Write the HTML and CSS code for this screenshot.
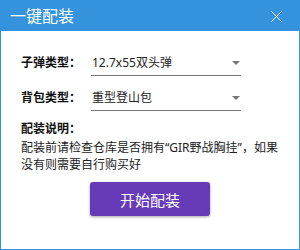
FILE: index.html
```html
<!DOCTYPE html>
<html lang="zh-CN">
  <head>
    <meta charset="UTF-8" />
    <meta name="viewport" content="width=device-width, initial-scale=1.0" />
    <title>一键配装</title>
    <link rel="stylesheet" href="styles.css">
  </head>
  <body>
    <div class="window">
      <div class="titlebar">
        <span class="title">一键配装</span>
        <svg class="close" width="11" height="11" viewBox="0 0 11 11">
          <path d="M0.5 0.5 L10.5 10.5 M10.5 0.5 L0.5 10.5" stroke="#fff" stroke-width="1" fill="none" />
        </svg>
      </div>
      <div class="content">
        <div class="row">
          <span class="label">子弹类型：</span>
          <div class="select">
            <span class="value">12.7x55双头弹</span>
            <span class="arrow"></span>
          </div>
        </div>
        <div class="row">
          <span class="label">背包类型：</span>
          <div class="select">
            <span class="value">重型登山包</span>
            <span class="arrow"></span>
          </div>
        </div>
        <div class="note-title">配装说明：</div>
        <p class="note">配装前请检查仓库是否拥有“GIR野战胸挂”，如果没有则需要自行购买好</p>
        <div class="actions">
          <button class="btn-start">开始配装</button>
        </div>
      </div>
    </div>
  </body>
</html>
```

FILE: styles.css
```css
* {
  margin: 0;
  padding: 0;
  box-sizing: border-box;
}

body {
  background-color: #fff;
  font-family: "Noto Sans", "Noto Sans CJK SC", sans-serif;
}

.window {
  width: 300px;
  height: 250px;
  border: 1px solid #3592dc;
  background-color: #fff;
}

.titlebar {
  height: 30px;
  background-color: #3592dc;
  display: flex;
  align-items: center;
  justify-content: space-between;
  padding: 0 17px 0 9px;
  color: #fff;
}

.title {
  font-size: 16px;
  line-height: 20px;
}

.close {
  display: block;
  margin-top: 1px;
}

.content {
  padding: 20px 20px 0 20px;
}

.row {
  display: flex;
  align-items: stretch;
  height: 25px;
  margin-bottom: 10px;
}

.label {
  width: 70px;
  font-size: 12px;
  font-weight: bold;
  line-height: 24px;
  color: #111;
}

.select {
  width: 150px;
  display: flex;
  align-items: center;
  justify-content: space-between;
  border-bottom: 1px solid #777;
  padding: 0 1px 0 1px;
}

.value {
  font-size: 12px;
  line-height: 24px;
  color: #222;
}

.arrow {
  width: 0;
  height: 0;
  border-left: 4px solid transparent;
  border-right: 4px solid transparent;
  border-top: 4px solid #777;
  margin-top: -1px;
}

.note-title {
  margin-top: -1px;
  font-size: 12px;
  font-weight: bold;
  line-height: 18px;
  color: #111;
}

.note {
  margin-top: 1px;
  font-size: 12px;
  line-height: 17px;
  color: #222;
}

.actions {
  display: flex;
  justify-content: center;
  margin-top: 9px;
}

.btn-start {
  width: 120px;
  height: 34px;
  border: none;
  border-radius: 3px;
  background-color: #673ab7;
  color: #fff;
  font-family: "Noto Sans", "Noto Sans CJK SC", sans-serif;
  font-size: 15px;
  box-shadow: 0 1px 3px rgba(0, 0, 0, 0.35);
  cursor: pointer;
}
```
